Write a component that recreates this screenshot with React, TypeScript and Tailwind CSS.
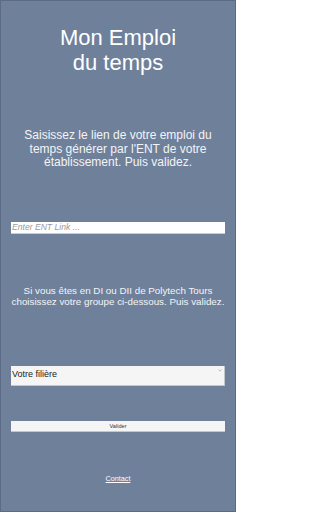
import { useState } from "react";

export default function App() {
  const [link, setLink] = useState("");
  const [filiere, setFiliere] = useState("");

  return (
    <div className="flex h-[512px] w-[236px] flex-col items-center border border-[#5b6b85] bg-[#6f809b] px-[10px] font-['Liberation_Sans',Arial,sans-serif] text-white">
      <h1 className="mt-[24px] text-center text-[22px] font-normal leading-[25px]">
        Mon Emploi
        <br />
        du temps
      </h1>

      <p className="mt-[54px] w-[214px] text-center text-[12px] leading-[13.6px] text-[#f3f4f6]">
        Saisissez le lien de votre emploi du temps générer par l'ENT de votre
        établissement. Puis validez.
      </p>

      <input
        type="text"
        value={link}
        onChange={(e) => setLink(e.target.value)}
        placeholder="Enter ENT Link ..."
        className="mt-[52px] h-[12px] w-[214px] border-b border-[#c9ccd2] bg-white px-[1px] text-[8.6px] italic leading-none text-[#333] outline-none placeholder:text-[#9a9a9a]"
      />

      <p className="mt-[52px] w-[226px] text-center text-[9.8px] leading-[10.8px] text-[#f3f4f6]">
        Si vous êtes en DI ou DII de Polytech Tours
        <br />
        choisissez votre groupe ci-dessous. Puis validez.
      </p>

      <div className="relative mt-[53px] h-[20px] w-[214px]">
        <select
          value={filiere}
          onChange={(e) => setFiliere(e.target.value)}
          className="h-full w-full appearance-none border-b border-r border-[#c4c7cd] bg-[#f5f5f5] pl-[1px] text-[9px] text-[#222] outline-none"
        >
          <option value="">Votre filière</option>
          <option value="DI">DI</option>
          <option value="DII">DII</option>
        </select>
        <svg
          className="pointer-events-none absolute right-[3px] top-[9px] h-[3px] w-[4px]"
          viewBox="0 0 4 3"
          fill="none"
          stroke="#a8a8a8"
          strokeWidth="0.7"
        >
          <path d="M0.5 0.5 L2 2.2 L3.5 0.5" />
        </svg>
      </div>

      <button
        type="button"
        className="mt-[41px] h-[11px] w-[214px] border-b border-[#c4c7cd] bg-[#f5f5f5] text-[5.6px] leading-none text-[#333]"
      >
        Valider
      </button>

      <a
        href="#"
        className="mt-[43px] text-[7.2px] leading-[8px] text-white underline"
      >
        Contact
      </a>
    </div>
  );
}
